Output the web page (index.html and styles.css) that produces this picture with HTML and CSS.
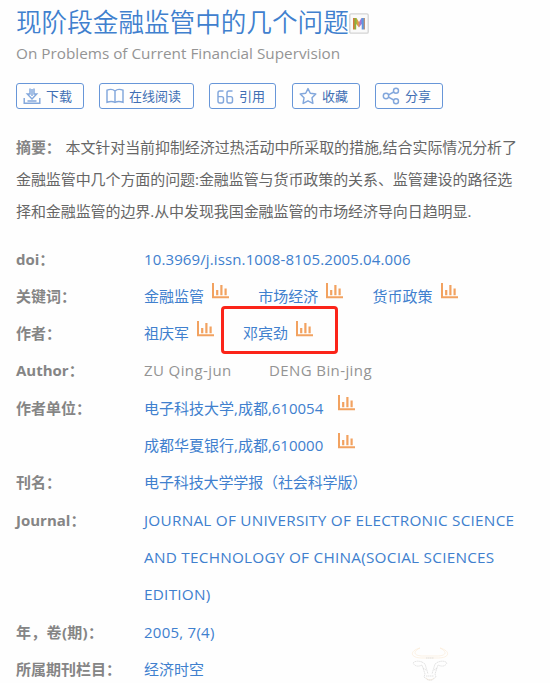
FILE: index.html
```html
<!DOCTYPE html>
<html lang="zh-CN">
<head>
<meta charset="utf-8">
<title>现阶段金融监管中的几个问题</title>
<link rel="stylesheet" href="styles.css">
</head>
<body>
<svg class="defs" width="0" height="0" aria-hidden="true">
  <symbol id="chart" viewBox="0 0 17 16"><path d="M1 0V14.2H17" fill="none" stroke="#f2a260" stroke-width="2"/><path d="M5.2 7V12.2M9.4 2V12.2M13.6 5.5V12.2" stroke="#f2a260" stroke-width="2.2"/></symbol>
</svg>
<main class="page">
  <h1 class="title"><span>现阶段金融监管中的几个问题</span><svg class="badge" viewBox="0 0 20 21"><defs><linearGradient id="rainbow" x1="0" y1="0" x2="1" y2="0"><stop offset="0" stop-color="#e9683f"/><stop offset=".22" stop-color="#84b83f"/><stop offset=".42" stop-color="#eda03f"/><stop offset=".62" stop-color="#a973cf"/><stop offset=".82" stop-color="#4c9de8"/><stop offset="1" stop-color="#d98a5b"/></linearGradient></defs><rect x=".8" y=".8" width="18.4" height="19.4" rx="1.2" fill="#fafafa" stroke="#d3d3d3" stroke-width="1.3"/><path d="M4 16.5V5H7.5L10 9L12.5 5H16V16.5H12.7V11L10 14.5L7.2 11V16.5Z" fill="url(#rainbow)"/></svg></h1>
  <p class="subtitle">On Problems of Current Financial Supervision</p>
  <nav class="actions">
    <a class="btn download"><svg viewBox="0 0 18 18"><path d="M1.2 11V16.3H16.8V11M7 1.5V7H4.3L9 12L13.7 7H11V1.5M9 2V9M4.5 14H13.5"/></svg><span>下载</span></a>
    <a class="btn read"><svg viewBox="0 0 18 18"><path d="M9 4C7 2.2 3.5 2.2 1 3.2V15.2C4 14.3 7 14.3 9 15.5C11 14.3 14 14.3 17 15.2V3.2C14.5 2.2 11 2.2 9 4ZM9 4V15.5"/></svg><span>在线阅读</span></a>
    <a class="btn cite"><svg viewBox="0 0 18 18"><path d="M7.5 4H3.8Q2 4 2 6V14Q2 16 3.8 16H5.7Q7.5 16 7.5 14V11.5Q7.5 9.6 5.7 9.6H2M16.5 4H12.8Q11 4 11 6V14Q11 16 12.8 16H14.7Q16.5 16 16.5 14V11.5Q16.5 9.6 14.7 9.6H11"/></svg><span>引用</span></a>
    <a class="btn fav"><svg viewBox="0 0 18 18"><path d="M9 1.6L11.3 6.2L16.8 7L13 10.8L13.9 16.4L9 13.8L4.1 16.4L5 10.8L1.2 7L6.7 6.2Z" stroke-linejoin="round"/></svg><span>收藏</span></a>
    <a class="btn share"><svg viewBox="0 0 18 18"><circle cx="4" cy="9" r="2.7"/><circle cx="14" cy="3.8" r="2.5"/><circle cx="14" cy="14.2" r="2.5"/><path d="M6.5 7.8L11.7 5M6.5 10.2L11.7 13"/></svg><span>分享</span></a>
  </nav>
  <section class="abstract">
    <p><b>摘要：</b><span>本文针对当前抑制经济过热活动中所采取的措施,结合实际情况分析了</span></p>
    <p>金融监管中几个方面的问题:金融监管与货币政策的关系、监管建设的路径选</p>
    <p>择和金融监管的边界.从中发现我国金融监管的市场经济导向日趋明显.</p>
  </section>
  <dl class="details">
    <dt>doi：</dt><dd><a class="doi">10.3969/j.issn.1008-8105.2005.04.006</a></dd>
    <dt>关键词：</dt><dd class="keywords"><span class="entry"><a>金融监管</a><svg class="chart"><use href="#chart"/></svg></span><span class="entry"><a>市场经济</a><svg class="chart"><use href="#chart"/></svg></span><span class="entry"><a>货币政策</a><svg class="chart"><use href="#chart"/></svg></span></dd>
    <dt>作者：</dt><dd class="authors"><span class="entry"><a>祖庆军</a><svg class="chart"><use href="#chart"/></svg></span><span class="entry marked"><a>邓宾劲</a><svg class="chart"><use href="#chart"/></svg></span></dd>
    <dt>Author：</dt><dd class="latin-authors"><span class="a1">ZU Qing-jun</span><span class="a2">DENG Bin-jing</span></dd>
    <dt>作者单位：</dt><dd><span class="entry org"><a>电子科技大学,成都,610054</a><svg class="chart"><use href="#chart"/></svg></span><span class="entry org"><a>成都华夏银行,成都,610000</a><svg class="chart"><use href="#chart"/></svg></span></dd>
    <dt>刊名：</dt><dd><a class="name">电子科技大学学报（社会科学版）</a></dd>
    <dt>Journal：</dt><dd class="journal"><a>JOURNAL OF UNIVERSITY OF ELECTRONIC SCIENCE</a><a>AND TECHNOLOGY OF CHINA(SOCIAL SCIENCES</a><a>EDITION)</a></dd>
    <dt class="issue-label">年，卷(期)：</dt><dd><a class="year">2005, 7(4)</a></dd>
    <dt>所属期刊栏目：</dt><dd><a>经济时空</a></dd>
  </dl>
  <svg class="bull" viewBox="0 0 40 36" fill="none" stroke-width=".6"><path d="M10 2C-1 5 0 12 12 12H28C40 12 41 5 30 2C38 6 36 10 27 10H13C4 10 2 6 10 2M16 32Q20 36 24 32" stroke="#fae9d3"/><path d="M12 16Q6 14 3 17Q6 22 12 19L15 28L14 31L18 34H22L26 31L25 28L28 19Q34 22 37 17Q34 14 28 16M12 16L15 18L18 28M28 16L25 18L22 28M16 30H24M16 12H24M13 22L16 24M27 22L24 24" stroke="#d0d0d0" stroke-dasharray="1.5 .5"/></svg>
</main>
</body>
</html>
```
FILE: styles.css
```css
*, *::before { box-sizing: border-box; }
body {
  margin: 0;
  background: #fefefe;
  color: #666;
  font: 15px/37.33px "Open Sans", "Noto Sans CJK SC", sans-serif;
  font-kerning: none;
}
.defs { position: absolute; }
.page { position: relative; height: 683px; padding: 0 0 0 16px; overflow: hidden; white-space: nowrap; }
h1, p, dl, dd { margin: 0; }
.title { display: flex; height: 42px; color: #4080ce; font-size: 25.6px; line-height: 42px; font-weight: 350; font-family: "Noto Sans CJK SC", sans-serif; }
.badge { width: 20px; height: 21px; margin-top: 13px; }
.subtitle { height: 24px; line-height: 23px; color: #949494; font-size: 15.3px; }
.actions { display: flex; margin-top: 17px; height: 26px; }
.btn { display: flex; align-items: center; height: 26px; padding-left: 6px; border: 1.3px solid #6796d8; border-radius: 3px; color: #416fb4; font-size: 13px; line-height: 24px; }
.btn svg { width: 18px; height: 18px; margin-right: 5px; fill: none; stroke: #82a7dc; stroke-width: 1.45; }
.download { width: 68px; margin-right: 15px; }
.read { width: 95px; margin-right: 15px; }
.cite { width: 67px; margin-right: 16px; }
.fav { width: 68px; margin-right: 15px; }
.share { width: 68px; }
.abstract { margin-top: 22px; line-height: 32px; letter-spacing: -.08px; }
.abstract p { height: 32px; }
.abstract b { display: inline-block; width: 49.5px; color: #858585; }
.details { display: grid; grid-template-columns: 128px 1fr; margin-top: 13.5px; }
dt { color: #858585; font-weight: 700; }
.issue-label { letter-spacing: .3px; }
dd, dt { min-height: 37.33px; }
dd a { color: #4080ce; }
.doi { letter-spacing: .12px; }
.name { letter-spacing: -.12px; }
.year { letter-spacing: .25px; }
.entry { display: inline-flex; height: 37.33px; align-items: center; vertical-align: top; }
.chart { width: 17px; height: 16px; margin: -10px 0 0 8px; }
.keywords, .authors { display: flex; }
.keywords .entry { width: 114.3px; }
.authors .entry { width: 99px; }
.latin-authors { display: flex; color: #949494; letter-spacing: .4px; }
.a1 { width: 125px; }
.org { display: flex; }
.org a { width: 179px; }
.org .chart { margin-left: 14.5px; }
.journal { font-size: 15.3px; letter-spacing: .26px; }
.journal a { display: block; }
.marked { position: relative; }
.marked::before { content: ""; position: absolute; left: -22.5px; top: -9px; width: 117.5px; height: 48px; border: 3px solid #fb2419; border-radius: 4px; }
.bull { position: absolute; left: 410px; top: 646px; width: 40px; height: 36px; }
```
